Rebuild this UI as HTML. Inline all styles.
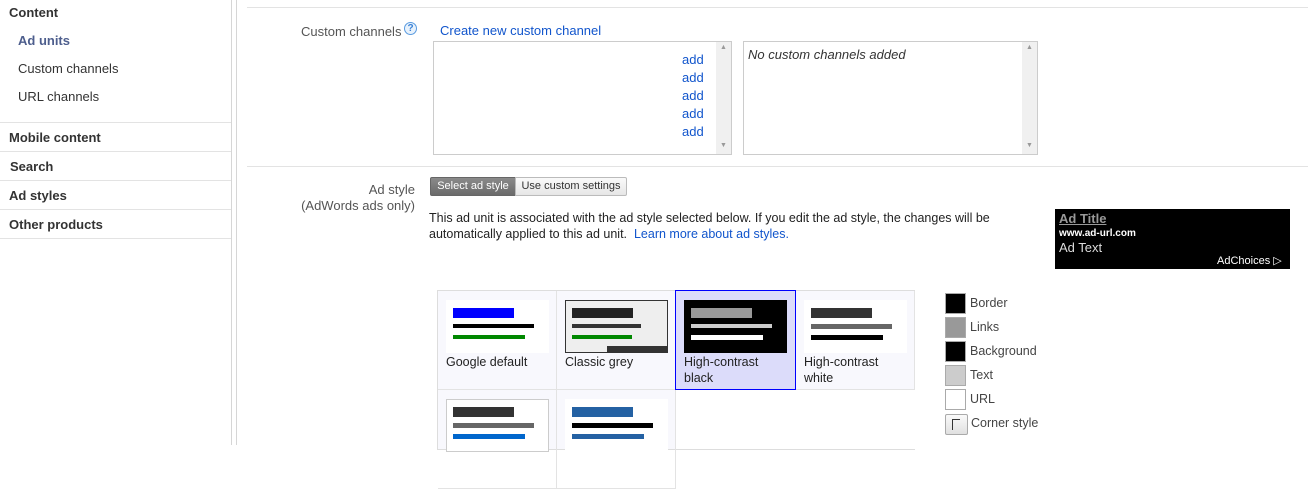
<!DOCTYPE html>
<html><head><style>
*{margin:0;padding:0;box-sizing:border-box}
body{width:1308px;height:445px;overflow:hidden;background:#fff;font-family:"Liberation Sans",Arial,sans-serif;font-size:13px;color:#222;position:relative}
.a{position:absolute;white-space:nowrap}
.nav{font-weight:bold;color:#333;font-size:13px}
.sub{color:#333;font-size:13px}
.hl{position:absolute;height:1px;background:#e3e3e3}
.lnk{color:#1155cc}
.cell{position:absolute;width:119px;height:99px;border-right:1px solid #e3e3e3;border-bottom:1px solid #e3e3e3}
.pv{position:absolute;left:8px;top:9px;width:103px;height:53px;background:#fff}
.bar{position:absolute}
.cl{position:absolute;left:8px;top:63px;font-size:12.5px;line-height:16px;color:#222}
.sw{position:absolute;left:945px;width:21px;height:21px;border:1px solid #aaa}
.swl{position:absolute;left:970px;font-size:12.5px;color:#444}
</style></head><body>
<!-- sidebar -->
<div class="a nav" style="left:9px;top:5px">Content</div>
<div class="a" style="left:18px;top:33px;font-weight:bold;color:#4d5e8d">Ad units</div>
<div class="a sub" style="left:18px;top:61px">Custom channels</div>
<div class="a sub" style="left:18px;top:89px">URL channels</div>
<div class="hl" style="left:0;top:122px;width:231px"></div>
<div class="a nav" style="left:9px;top:130px">Mobile content</div>
<div class="hl" style="left:0;top:151px;width:231px"></div>
<div class="a nav" style="left:10px;top:159px">Search</div>
<div class="hl" style="left:0;top:180px;width:231px"></div>
<div class="a nav" style="left:9px;top:188px">Ad styles</div>
<div class="hl" style="left:0;top:209px;width:231px"></div>
<div class="a nav" style="left:9px;top:217px">Other products</div>
<div class="hl" style="left:0;top:238px;width:231px"></div>
<div style="position:absolute;left:231px;top:0;width:1px;height:445px;background:#d6d6d6"></div>
<div style="position:absolute;left:236px;top:0;width:1px;height:445px;background:#d6d6d6"></div>

<div class="hl" style="left:247px;top:7px;width:1061px"></div>
<div class="hl" style="left:247px;top:166px;width:1061px"></div>

<div class="a" style="left:301px;top:24px;color:#555">Custom channels</div>
<div class="a" style="left:404px;top:22px;width:13px;height:13px;border-radius:50%;border:1px solid #5a9be0;background:#e8f2fc;color:#3a82d6;font-size:10px;line-height:11px;text-align:center;font-weight:bold">?</div>
<div class="a lnk" style="left:440px;top:23px">Create new custom channel</div>

<div class="a" style="left:433px;top:41px;width:299px;height:114px;border:1px solid #ccc"></div>
<div class="a" style="left:716px;top:42px;width:15px;height:112px;background:#f0f0f0"></div>
<div class="a" style="left:720px;top:44px;font-size:7px;color:#999">▲</div>
<div class="a" style="left:720px;top:142px;font-size:7px;color:#999">▼</div>
<div class="a lnk" style="left:682px;top:51px;line-height:18px;white-space:normal">add<br>add<br>add<br>add<br>add</div>

<div class="a" style="left:743px;top:41px;width:295px;height:114px;border:1px solid #ccc"></div>
<div class="a" style="left:1022px;top:42px;width:15px;height:112px;background:#f0f0f0"></div>
<div class="a" style="left:1026px;top:44px;font-size:7px;color:#999">▲</div>
<div class="a" style="left:1026px;top:142px;font-size:7px;color:#999">▼</div>
<div class="a" style="left:748px;top:47px;font-style:italic;color:#333">No custom channels added</div>

<div class="a" style="left:300px;top:182px;width:115px;text-align:right;color:#555;line-height:16px">Ad style<br>(AdWords ads only)</div>
<div class="a" style="left:430px;top:177px;width:86px;height:19px;background:linear-gradient(#8a8a8a,#6a6a6a);border:1px solid #666;color:#fff;font-size:11px;line-height:17px;text-align:center;border-radius:2px 0 0 2px">Select ad style</div>
<div class="a" style="left:515px;top:177px;width:112px;height:19px;background:linear-gradient(#fafafa,#e6e6e6);border:1px solid #bbb;color:#333;font-size:11px;line-height:17px;text-align:center;border-radius:0 2px 2px 0">Use custom settings</div>
<div class="a" style="left:429px;top:210px;line-height:16px;font-size:12.5px">This ad unit is associated with the ad style selected below. If you edit the ad style, the changes will be<br>automatically applied to this ad unit.&nbsp; <span class="lnk">Learn more about ad styles.</span></div>

<div class="a" style="left:1055px;top:209px;width:235px;height:60px;background:#000;color:#fff">
<div class="a" style="left:4px;top:2px;font-weight:bold;color:#999;text-decoration:underline;font-size:13px">Ad Title</div>
<div class="a" style="left:4px;top:19px;font-size:10px;font-weight:bold">www.ad-url.com</div>
<div class="a" style="left:4px;top:31px;font-size:13px;color:#ddd">Ad Text</div>
<div class="a" style="left:162px;top:45px;font-size:11px">AdChoices ▷</div>
</div>

<!-- grid -->
<div class="a" style="left:437px;top:290px;width:478px;height:160px;border:1px solid #ddd;background:#f8f8fd"></div>
<div class="a" style="left:675px;top:389px;width:240px;height:60px;background:#fff"></div>
<div class="cell" style="left:438px;top:291px">
 <div class="pv"><div class="bar" style="left:7px;top:8px;width:61px;height:10px;background:#00f"></div><div class="bar" style="left:7px;top:24px;width:81px;height:4px;background:#000"></div><div class="bar" style="left:7px;top:35px;width:72px;height:4px;background:#080"></div></div>
 <div class="cl">Google default</div></div>
<div class="cell" style="left:557px;top:291px">
 <div class="pv" style="background:#eee;border:1px solid #333"><div class="bar" style="left:6px;top:7px;width:61px;height:10px;background:#222"></div><div class="bar" style="left:6px;top:23px;width:69px;height:4px;background:#333"></div><div class="bar" style="left:6px;top:34px;width:60px;height:4px;background:#080"></div><div class="bar" style="left:41px;top:45px;width:61px;height:7px;background:#333"></div></div>
 <div class="cl">Classic grey</div></div>
<div class="cell" style="left:676px;top:291px;background:#dcdcfa;border:1px solid #00f;left:675px;top:290px;width:121px;height:100px">
 <div class="pv" style="background:#000"><div class="bar" style="left:7px;top:8px;width:61px;height:10px;background:#999"></div><div class="bar" style="left:7px;top:24px;width:81px;height:4px;background:#ccc"></div><div class="bar" style="left:7px;top:35px;width:72px;height:5px;background:#fff"></div></div>
 <div class="cl">High-contrast<br>black</div></div>
<div class="cell" style="left:796px;top:291px">
 <div class="pv"><div class="bar" style="left:7px;top:8px;width:61px;height:10px;background:#333"></div><div class="bar" style="left:7px;top:24px;width:81px;height:5px;background:#666"></div><div class="bar" style="left:7px;top:35px;width:72px;height:5px;background:#000"></div></div>
 <div class="cl">High-contrast<br>white</div></div>
<div class="cell" style="left:438px;top:390px">
 <div class="pv" style="border:1px solid #ccc"><div class="bar" style="left:6px;top:7px;width:61px;height:10px;background:#333"></div><div class="bar" style="left:6px;top:23px;width:81px;height:5px;background:#666"></div><div class="bar" style="left:6px;top:34px;width:72px;height:5px;background:#0066cc"></div></div></div>
<div class="cell" style="left:557px;top:390px">
 <div class="pv"><div class="bar" style="left:7px;top:8px;width:61px;height:10px;background:#2461a3"></div><div class="bar" style="left:7px;top:24px;width:81px;height:5px;background:#000"></div><div class="bar" style="left:7px;top:35px;width:72px;height:5px;background:#2461a3"></div></div></div>

<!-- swatches -->
<div class="sw" style="top:293px;background:#000"></div><div class="swl" style="top:296px">Border</div>
<div class="sw" style="top:317px;background:#999"></div><div class="swl" style="top:320px">Links</div>
<div class="sw" style="top:341px;background:#000"></div><div class="swl" style="top:344px">Background</div>
<div class="sw" style="top:365px;background:#ccc"></div><div class="swl" style="top:368px">Text</div>
<div class="sw" style="top:389px;background:#fff"></div><div class="swl" style="top:392px">URL</div>
<div class="sw" style="top:414px;background:linear-gradient(#fafafa,#e0e0e0);border-radius:2px;width:23px"><div style="position:absolute;left:6px;top:4px;width:8px;height:11px;border-left:1px solid #333;border-top:1px solid #333"></div></div><div class="swl" style="top:416px;left:971px">Corner style</div>
</body></html>
